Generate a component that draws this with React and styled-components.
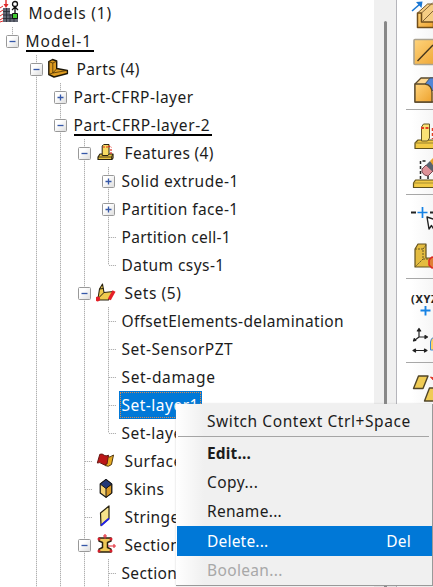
import React from "react";
import styled, { createGlobalStyle, css } from "styled-components";

const GlobalStyle = createGlobalStyle`
  * { box-sizing: border-box; }
  html, body { margin: 0; overflow: hidden; background: #fff; }
  body { font-family: "Noto Sans", "Open Sans", sans-serif; font-size: 15.5px; color: #1c1c1c; }
  svg { display: block; flex: none; }
`;

const Window = styled.div`
  position: relative;
  display: flex;
  width: 433px;
  height: 587px;
  overflow: hidden;
  background: #fff;
`;

const Tree = styled.div`
  flex: none;
  width: 374px;
  height: 588px;
  margin-top: -1px;
  overflow: hidden;
`;

const TreeRow = styled.div`
  display: flex;
  align-items: center;
  height: 28px;
  white-space: nowrap;
`;

const dots = "#b0b0b0";
const Guide = styled.div`
  display: flex;
  align-items: center;
  flex: none;
  width: 24px;
  height: 28px;
  padding-left: 6px;
  background-repeat: no-repeat;
  ${({ $line }) =>
    $line &&
    css`
      background-image: repeating-linear-gradient(to bottom, ${dots} 0 1px, #e6e6e6 1px 2px)
        ${$line === "full" || $line === "half" ? "" : `, repeating-linear-gradient(to right, ${dots} 0 1px, #eee 1px 2px)`};
      background-size: 1px ${$line === "half" || $line === "end" ? "14px" : "28px"}, 7px 1px;
      background-position: 12px 0, 13px 14px;
    `}
`;

const Expander = styled.span`
  display: flex;
  align-items: center;
  justify-content: center;
  width: 13px;
  height: 13px;
  border: 1px solid #999;
  border-radius: 1.5px;
  background: linear-gradient(135deg, #fff 30%, #dedede);
`;

const Label = styled.span`
  height: 25px;
  margin-left: ${({ $icon }) => ($icon ? "0.5px" : "1.5px")};
  line-height: 25px;
  letter-spacing: ${({ $track }) => $track || 0}px;
  ${({ $underline }) =>
    $underline &&
    css`
      height: 22px;
      line-height: 22px;
      padding-right: 1.5px;
      border-bottom: 2px solid #000;
    `}
  ${({ $selected }) =>
    $selected &&
    css`
      height: 28px;
      line-height: 27px;
      margin-left: -1px;
      padding: 0 2px 0 1.5px;
      color: #fff;
      background: #0078d7;
      border: 1px solid #0078d7;
      outline: 1px dotted #d98b50;
      outline-offset: -2px;
    `}
`;

const Gutter = styled.div`
  flex: none;
  display: flex;
  width: 22px;
  padding: 21px 0 0 10px;
  background: #f0f0f0;
`;

const Thumb = styled.div`
  width: 2.5px;
  border-radius: 2px 2px 0 0;
  background: #888;
`;

const Toolbox = styled.div`
  flex: none;
  width: 37px;
  border-left: 1px solid #b5b5bb;
  background: linear-gradient(to right, #fff 40%, #f6f6f6);
`;

const ToolGroup = styled.div`
  height: ${({ $h }) => $h}px;
`;

const Divider = styled.div`
  height: 1px;
  margin-left: 9px;
  background: #a8a8a8;
`;

const Menu = styled.div`
  position: absolute;
  left: 176px;
  top: 404px;
  width: 257px;
  height: 182px;
  padding: 1px 0 0 1px;
  border-right: 1px solid #999;
  border-bottom: 1px solid #999;
  background: linear-gradient(to right, #fff, #f0f0f0 28px);
  box-shadow: 0 0 2px #9996;
`;

const MenuItem = styled.div`
  display: flex;
  align-items: center;
  justify-content: space-between;
  height: ${({ $first }) => ($first ? 31 : 29.4)}px;
  padding: 0 21px 0 30px;
  white-space: nowrap;
  font-weight: ${({ $bold }) => ($bold ? 700 : 400)};
  letter-spacing: ${({ $track }) => $track || 0}px;
  color: ${({ $active, $disabled }) => ($active ? "#fff" : $disabled ? "#a8a8a8" : "#1c1c1c")};
  background: ${({ $active }) => ($active ? "#0078d7" : "transparent")};
`;

const MenuRule = styled.div`
  height: 1px;
  margin: 0 3px 1px 1px;
  background: #a5a5a5;
`;

const Slot = ({ children }) => (
  <svg width="28" height="28" viewBox="0 0 28 28" strokeLinejoin="round">{children}</svg>
);

const icons = {
  models: (
    <Slot>
      <path d="M0 9l3-2M0 13l3-2M0 17l3-2M0 21l3-2M0 23l3-1" stroke="#e02b2b" />
      <path d="M3 9h7v6h8v8H3z" fill="#626673" />
      <path d="M3 12.5h7M3 16h15M3 19.5h15M6.5 9v14M10 15v8M14 15v8" stroke="#252a33" strokeWidth=".8" />
      <path d="M6 1v6" stroke="#e02b2b" strokeWidth="1.4" />
      <path d="M3.5 5h5L6 9z" fill="#e02b2b" />
      <path d="M15 7v7M12 11l3-3 3 3" stroke="#111" strokeWidth="1.3" fill="none" />
      <circle cx="15" cy="5" r="2.5" fill="#fff" stroke="#111" strokeWidth="1.3" />
      <path d="M12.5 14.5h5v5h-5z" fill="#42cc32" stroke="#111" />
    </Slot>
  ),
  parts: (
    <Slot>
      <path d="M.8 6.500L4.500 4.500 8.700 6V13.500L19.400 15.500V18.500L6 22 .8 19.500z" fill="#dd9b20" stroke="#1d1708" strokeWidth="1.4" />
      <path d="M1 6.700l3.800 1.300V18l14-2.500M4.800 18L1 19.300M4.800 8l3.700-1.700M4.800 18l4-4.300" fill="none" stroke="#4b3205" strokeWidth=".8" />
    </Slot>
  ),
  features: (
    <Slot>
      <path d="M2 18l2-3h13v4l-1 1.5H2z" fill="#e9c441" stroke="#29220f" strokeWidth="1.2" />
      <path d="M6.2 7l1.5-1.5h5.3V15l-1 1.5H6.200z" fill="#f8dc63" stroke="#29220f" />
      <path d="M2 18h13.5l1.3-3M15.5 18v2.500" fill="none" stroke="#29220f" strokeWidth=".8" />
      <path d="M7 8h5M12.500 7l3 1.500M15 10v5" stroke="#de2d20" strokeWidth="1.2" strokeDasharray="2 1" />
    </Slot>
  ),
  sets: (
    <Slot>
      <path d="M2 19.500L3.500 10 6.500 5l1.500 8.500 9.500-1L12.500 21 2 21z" fill="#efcb4d" stroke="#29220f" strokeWidth="1.1" />
      <path d="M2.500 19L8 13.500M3.500 10l4-.5" fill="none" stroke="#29220f" />
      <path d="M13.300 20.500L18 12" stroke="#e51f27" strokeWidth="3.4" />
      <circle cx="1.8" cy="20" r="2.4" fill="#e51f27" />
    </Slot>
  ),
  surfaces: (
    <Slot>
      <path d="M8 17l2-8q4 2.500 7.500-1l-2 9.500q-3 3-6.500 1z" fill="#e5aa22" stroke="#513711" />
      <path d="M1.300 16L3.800 7.300q2.500-1 4.400 1 2 1.300 4.300-.1L11 17q-3 1.800-5-.3-2.300-1.800-4.700-.7z" fill="#bc1616" stroke="#651713" />
    </Slot>
  ),
  skins: (
    <Slot>
      <path d="M4.200 9L10 4.500 15.700 9v9L10 22.300 4.200 18z" fill="#f5d171" stroke="#171717" strokeWidth="1.200" />
      <path d="M10 13.500L15.700 9v9L10 22.300z" fill="#d79724" stroke="#171717" />
      <path d="M4.200 9L10 4.500 15.700 9 10 13.500z" fill="#213877" stroke="#171717" />
    </Slot>
  ),
  stringers: (
    <Slot>
      <path d="M4.500 10l8.500-7v12.500l-8 7z" fill="#f6e389" stroke="#29220f" strokeWidth="1.200" />
      <path d="M5 22.500l8-7" stroke="#2222e8" strokeWidth="1.800" />
    </Slot>
  ),
  sections: (
    <Slot>
      <path d="M3 7h12v3l-3.500 1.500v5l3.500 1.700V21H3v-2.800l3.500-1.700v-5L3 10z" fill="#eec856" stroke="#29220f" strokeWidth="1.500" />
      <path d="M9 3v5M7 5h4M12 15h8M18 13v4" stroke="#e32935" strokeWidth="1.100" />
      {[[3, 8], [15, 8], [3, 20], [15, 20]].map(([x, y]) => (
        <circle key={`${x}-${y}`} cx={x} cy={y} r="1.500" fill="#d51f2b" />
      ))}
    </Slot>
  ),
};

const F = "full";
const rows = [
  { text: "Models (1)", icon: "models", track: 0.8 },
  { text: "Model-1", lines: ["half"], open: true, underline: true, track: 1 },
  { text: "Parts (4)", lines: [0, F], open: true, icon: "parts", track: 0.4 },
  { text: "Part-CFRP-layer", lines: [0, F, F], open: false, track: 0.5 },
  { text: "Part-CFRP-layer-2", lines: [0, F, F], open: true, underline: true, track: 0.6 },
  { text: "Features (4)", lines: [0, F, F, F], open: true, icon: "features", track: 0.35 },
  { text: "Solid extrude-1", lines: [0, F, F, F, F], open: false, track: 0.5 },
  { text: "Partition face-1", lines: [0, F, F, F, F], open: false, track: 0.4 },
  { text: "Partition cell-1", lines: [0, F, F, F, "tee"], track: 0.3 },
  { text: "Datum csys-1", lines: [0, F, F, F, "end"], track: 0.45 },
  { text: "Sets (5)", lines: [0, F, F, F], open: true, icon: "sets", track: 0.55 },
  { text: "OffsetElements-delamination", lines: [0, F, F, F, "tee"], track: 0.35 },
  { text: "Set-SensorPZT", lines: [0, F, F, F, "tee"], track: 0.55 },
  { text: "Set-damage", lines: [0, F, F, F, "tee"], track: 0.65 },
  { text: "Set-layer1", lines: [0, F, F, F, "tee"], selected: true, track: 0.5 },
  { text: "Set-layer2", lines: [0, F, F, F, "end"], track: 0.5 },
  { text: "Surfaces", lines: [0, F, F, "tee"], icon: "surfaces", track: 0.5 },
  { text: "Skins", lines: [0, F, F, "tee"], icon: "skins", track: 0.4 },
  { text: "Stringers", lines: [0, F, F, "tee"], icon: "stringers", track: 0.4 },
  { text: "Section Assignments", lines: [0, F, F, F], open: true, icon: "sections", track: 0.35 },
  { text: "Section Assignment-1", lines: [0, F, F, F, "tee"], track: 0.35 },
];

function TreeItem({ row }) {
  const lines = row.lines || [];
  return (
    <TreeRow>
      {lines.map((line, i) => (
        <Guide key={i} $line={line}>
          {i === lines.length - 1 && row.open !== undefined && (
            <Expander>
              <svg width="9" height="9" viewBox="0 0 9 9">
                <path d={row.open ? "M1.5 4.5h6" : "M1.5 4.5h6M4.5 1.5v6"} stroke="#3658a8" strokeWidth="1.3" />
              </svg>
            </Expander>
          )}
        </Guide>
      ))}
      {row.icon && icons[row.icon]}
      <Label $icon={row.icon} $underline={row.underline} $selected={row.selected} $track={row.track}>
        {row.text}
      </Label>
    </TreeRow>
  );
}

const Tool = ({ top, h, children }) => (
  <svg width="36" height={h} viewBox={`397 ${top} 36 ${h}`} strokeLinejoin="round">{children}</svg>
);

function Tools() {
  return (
    <Toolbox>
      <ToolGroup $h={109}>
        <Tool top={0} h={34}>
          <defs>
            <linearGradient id="amber" x1="0" y1="0" x2="1" y2="1">
              <stop offset="0" stopColor="#ffd47c" />
              <stop offset="1" stopColor="#eda12c" />
            </linearGradient>
          </defs>
          <path d="M417.500 13l10-9h12v22h-22z" fill="#f5cd84" stroke="#735527" />
          <path d="M417.500 13h4v9h12v5.500h-16z" fill="url(#amber)" stroke="#704d1a" strokeWidth="1.500" />
          <path d="M421.500 13l11-10M422 22l11-11M425 19l9-9" stroke="#846335" fill="none" />
          <path d="M412 11l8-7" stroke="#1876d3" strokeWidth="1.600" />
          <path d="M416 2l6.500-.5-1 6.500z" fill="#1876d3" />
        </Tool>
        <Tool top={34} h={38}>
          <rect x="414" y="39.500" width="28" height="25" rx="1" fill="url(#amber)" stroke="#aaa28f" strokeWidth="1.600" />
          <path d="M417.500 61L433 45" stroke="#45351c" strokeWidth="1.400" />
        </Tool>
        <Tool top={72} h={37}>
          <path d="M415 84l6-6h16v24h-22z" fill="#ffd891" stroke="#5b4a2c" strokeWidth="1.300" />
          <path d="M425 84l5-6h7v12l-4 1z" fill="#5286d7" stroke="#49546a" />
          <path d="M415 84h10q7 1 7 9v9h-17z" fill="url(#amber)" stroke="#5b4a2c" strokeWidth="1.300" />
        </Tool>
      </ToolGroup>
      <Divider />
      <ToolGroup $h={84}>
        <Tool top={110} h={44}>
          <path d="M415 143l3-3h20v8.500h-23z" fill="#f2ca45" stroke="#5f501b" strokeWidth="1.200" />
          <path d="M421.500 127l2-3h6v14l-2 3h-6z" fill="#fae275" stroke="#665725" />
          <path d="M415 143h18" stroke="#96802f" />
          <path d="M421 128h8" stroke="#e23f22" strokeWidth="2" strokeDasharray="3 1.500" />
          <path d="M432.500 128v11" stroke="#e23f22" strokeWidth="1.500" strokeDasharray="3 2" />
        </Tool>
        <Tool top={154} h={40}>
          <path d="M413.500 183l2-3h22v7.500h-24z" fill="#f2ca45" stroke="#5f501b" strokeWidth="1.200" />
          <path d="M413.500 183h20" stroke="#a68d30" />
          <path d="M420.500 179v-18h7M428 179v-6" fill="none" stroke="#222" strokeWidth="1.500" strokeDasharray="3 2" />
          <path d="M422 169l4-4 7 6-5 5q-4 0-6-4z" fill="#df9299" stroke="#774950" />
          <path d="M426 165l4-4 6 5-4 5z" fill="#59636e" />
          <path d="M430 161l5-5v12z" fill="#e9a42b" />
        </Tool>
      </ToolGroup>
      <Divider />
      <ToolGroup $h={83}>
        <Tool top={195} h={42}>
          <path d="M411 212.500h5M430 212.500h4" stroke="#222" strokeWidth="2" />
          <path d="M417.500 212.500h10M422.500 207v11" stroke="#1682e4" strokeWidth="1.700" />
          <path d="M427 217l2 12 2.500-3.500 3 5v-11z" fill="#fff" stroke="#222" strokeWidth="1.400" />
        </Tool>
        <Tool top={237} h={41}>
          <path d="M415 249l3-5h8v14h8v9h-19z" fill="#e4bc40" stroke="#63511d" strokeWidth="1.200" />
          <path d="M415 249h8v10l-8 8M423 249l3-4M423 259h8" fill="none" stroke="#675724" strokeDasharray="2 1" />
          <path d="M429 260l3-3 6 1v8l-6 2-3-3z" fill="#df7f35" stroke="#df2723" strokeWidth="1.500" />
        </Tool>
      </ToolGroup>
      <Divider />
      <ToolGroup $h={83}>
        <Tool top={279} h={43}>
          <text x="411" y="303" fontFamily="Noto Sans" fontSize="11" fontWeight="700" letterSpacing=".7" fill="#222">(XYZ)</text>
          <path d="M420.500 310.500h10M425.500 306v9.500" stroke="#1682e4" strokeWidth="1.900" />
        </Tool>
        <Tool top={322} h={40}>
          <g stroke="#222" strokeWidth="1.200" fill="#222">
            <path d="M419 337v-7M419 337h6M419 337l-4 3M416 350.500h8" />
            <path d="M417.300 331l1.700-2.500 1.700 2.500zM425 335.500l2.500 1.500-2.500 1.500zM413.500 341l.8-2.500 1.500 2zM415.500 349l-2.500 1.500 2.500 1.500zM424.500 349l2.500 1.500-2.500 1.500z" />
          </g>
          <path d="M430.500 350v-8q0-4 4-5v13z" fill="#ffd167" stroke="#3e88d8" />
        </Tool>
      </ToolGroup>
      <Divider />
      <Tool top={363} h={60}>
        <path d="M413.500 388.500l5-12.500h9.500l-5 12.500z" fill="#efcb55" stroke="#504528" strokeWidth="1.400" />
        <path d="M424.500 401l5-13h10v13z" fill="#efcb55" stroke="#504528" strokeWidth="1.400" />
        <path d="M430.500 377l3.500 1v3z" fill="#df3324" stroke="#df3324" />
      </Tool>
    </Toolbox>
  );
}

export default function App() {
  return (
    <Window>
      <GlobalStyle />
      <Tree>
        {rows.map((row) => (
          <TreeItem key={row.text} row={row} />
        ))}
      </Tree>
      <Gutter>
        <Thumb />
      </Gutter>
      <Tools />
      <Menu>
        <MenuItem $first $track={0.57}><span>Switch Context Ctrl+Space</span></MenuItem>
        <MenuRule />
        <MenuItem $bold $track={0.15}>Edit...</MenuItem>
        <MenuItem $track={0.45}>Copy...</MenuItem>
        <MenuItem $track={0.3}>Rename...</MenuItem>
        <MenuItem $active $track={0.2}><span>Delete...</span><span>Del</span></MenuItem>
        <MenuItem $disabled $track={0.35}>Boolean...</MenuItem>
      </Menu>
    </Window>
  );
}
